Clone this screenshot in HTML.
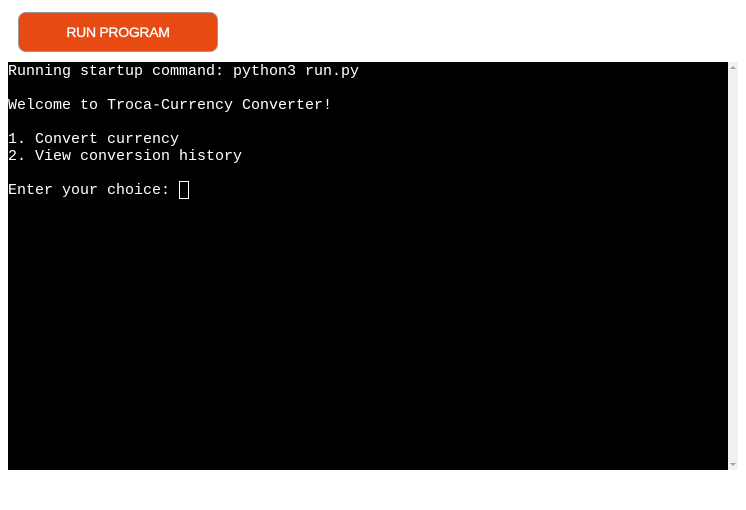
<!DOCTYPE html>
<html><head><style>
body{margin:0;width:746px;height:510px;background:#fff;position:relative;overflow:hidden}
.btn{position:absolute;left:18px;top:12px;width:198px;height:38px;background:#e84a14;border:1px solid #999;border-radius:8px;color:#fff;font:14px "Liberation Sans",sans-serif;text-align:center;line-height:38px;letter-spacing:-0.3px;-webkit-text-stroke:0.3px #fff}
.term{position:absolute;left:8px;top:62px;width:720px;height:408px;background:#000}
pre{margin:0;color:#fff;font:15px/17px "Liberation Mono",monospace;position:absolute;left:0;top:1px}
.cur{position:absolute;left:171px;top:119px;width:8px;height:16px;border:1px solid #fff}
.sb{position:absolute;left:728px;top:62px;width:10px;height:408px;background:#f1f1f1}
.up{position:absolute;left:2px;top:4px;border:3px solid transparent;border-bottom:3px solid #a3a3a3;border-top:0}
.dn{position:absolute;left:2px;bottom:4px;border:3px solid transparent;border-top:3px solid #a3a3a3;border-bottom:0}
</style></head><body>
<div class="btn">RUN PROGRAM</div>
<div class="term"><pre>Running startup command: python3 run.py

Welcome to Troca-Currency Converter!

1. Convert currency
2. View conversion history

Enter your choice: </pre><div class="cur"></div></div>
<div class="sb"><div class="up"></div><div class="dn"></div></div>
</body></html>
